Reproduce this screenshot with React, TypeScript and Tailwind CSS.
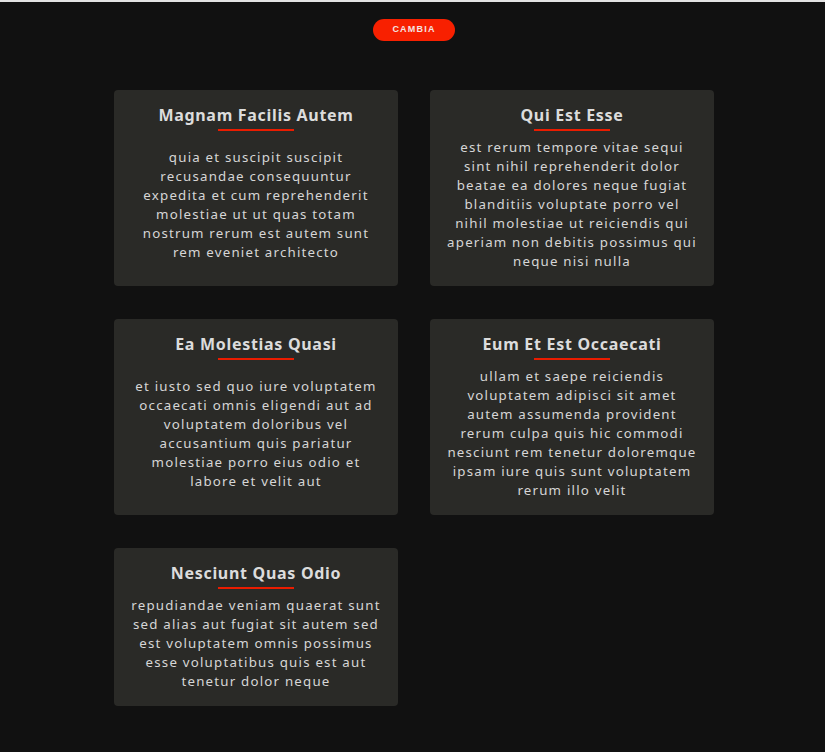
const posts = [
  {
    title: 'Magnam Facilis Autem',
    body: 'quia et suscipit suscipit recusandae consequuntur expedita et cum reprehenderit molestiae ut ut quas totam nostrum rerum est autem sunt rem eveniet architecto',
  },
  {
    title: 'Qui Est Esse',
    body: 'est rerum tempore vitae sequi sint nihil reprehenderit dolor beatae ea dolores neque fugiat blanditiis voluptate porro vel nihil molestiae ut reiciendis qui aperiam non debitis possimus qui neque nisi nulla',
  },
  {
    title: 'Ea Molestias Quasi',
    body: 'et iusto sed quo iure voluptatem occaecati omnis eligendi aut ad voluptatem doloribus vel accusantium quis pariatur molestiae porro eius odio et labore et velit aut',
  },
  {
    title: 'Eum Et Est Occaecati',
    body: 'ullam et saepe reiciendis voluptatem adipisci sit amet autem assumenda provident rerum culpa quis hic commodi nesciunt rem tenetur doloremque ipsam iure quis sunt voluptatem rerum illo velit',
  },
  {
    title: 'Nesciunt Quas Odio',
    body: 'repudiandae veniam quaerat sunt sed alias aut fugiat sit autem sed est voluptatem omnis possimus esse voluptatibus quis est aut tenetur dolor neque',
  },
];

export default function App() {
  return (
    <div className="min-h-screen bg-[#111111] border-t-2 border-[#e2e2e2] pb-11 font-['Noto_Sans',sans-serif]">
      {/* Toggle */}
      <div className="flex justify-center pt-[17px] pl-[3px]">
        <button className="w-[82px] h-[22px] rounded-full bg-[#f82000] text-[#f3e4e4] text-[9px] font-bold tracking-[1.2px] font-['Liberation_Sans',Arial,sans-serif]">
          CAMBIA
        </button>
      </div>

      {/* Posts */}
      <div className="grid grid-cols-[284px_284px] gap-x-8 gap-y-[33px] justify-center pl-[3px] mt-[49px]">
        {posts.map((post, index) => (
          <div key={index} className="flex flex-col items-center bg-[#2a2a27] rounded px-[17px] py-[15px] text-center">
            <h2 className="text-[16px] leading-5 font-bold text-[#dcdcdc] tracking-[0.7px]">{post.title}</h2>
            <div className="w-[76px] h-[2px] bg-[#ea1c00] mt-1"></div>
            <div className="flex-1 flex items-center mt-[7px]">
              <p className="text-[13.3px] leading-[19px] text-[#d6d6d6] tracking-[1.2px]">{post.body}</p>
            </div>
          </div>
        ))}
      </div>
    </div>
  );
}
